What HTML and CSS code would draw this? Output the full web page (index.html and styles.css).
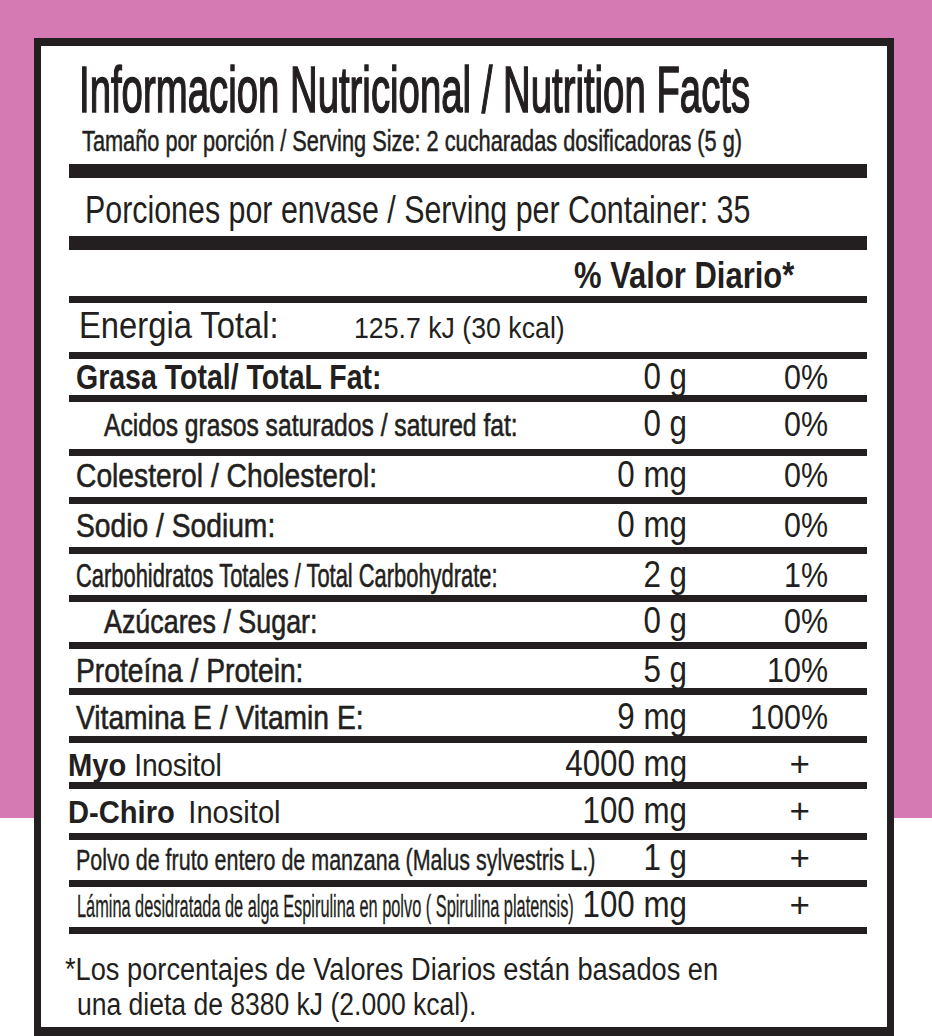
FILE: index.html
```html
<!DOCTYPE html>
<html lang="es">
<head>
<meta charset="utf-8">
<title>Informacion Nutricional / Nutrition Facts</title>
<link rel="stylesheet" href="styles.css">
</head>
<body>
<section class="card">
  <div class="facts">
    <header class="head">
      <h1 class="t title">Informacion Nutricional / Nutrition Facts</h1>
      <p class="t serving">Tamaño por porción / Serving Size: 2 cucharadas dosificadoras (5 g)</p>
    </header>
    <div class="row thick p12"><span class="t porciones">Porciones por envase / Serving per Container: 35</span></div>
    <div class="row thick p8"><span class="t dv">% Valor Diario*</span></div>
    <div class="row p4"><span class="t energy">Energia Total:</span><span class="t kcal">125.7 kJ (30 kcal)</span></div>
    <div class="row p0"><span class="t lbl fat">Grasa Total/ TotaL Fat:</span><span class="t val">0 g</span><span class="t pct">0%</span></div>
    <div class="row p4"><span class="t lbl indent acidos">Acidos grasos saturados / satured fat:</span><span class="t val">0 g</span><span class="t pct">0%</span></div>
    <div class="row p1"><span class="t lbl">Colesterol / Cholesterol:</span><span class="t val">0 mg</span><span class="t pct">0%</span></div>
    <div class="row p3"><span class="t lbl">Sodio / Sodium:</span><span class="t val">0 mg</span><span class="t pct">0%</span></div>
    <div class="row p3"><span class="t lbl carbs">Carbohidratos Totales / Total Carbohydrate:</span><span class="t val">2 g</span><span class="t pct">1%</span></div>
    <div class="row p1"><span class="t lbl indent sugar">Azúcares / Sugar:</span><span class="t val">0 g</span><span class="t pct">0%</span></div>
    <div class="row p3"><span class="t lbl">Proteína / Protein:</span><span class="t val">5 g</span><span class="t pct">10%</span></div>
    <div class="row p4"><span class="t lbl">Vitamina E / Vitamin E:</span><span class="t val">9 mg</span><span class="t pct">100%</span></div>
    <div class="row p3"><span class="t lbl ino"><b>Myo</b> <span class="ino-name">Inositol</span></span><span class="t val">4000 mg</span><span class="t pct plus">+</span></div>
    <div class="row p4"><span class="t lbl ino"><b>D-Chiro</b> <span class="gap">Inositol</span></span><span class="t val">100 mg</span><span class="t pct plus">+</span></div>
    <div class="row p0"><span class="t lbl apple">Polvo de fruto entero de manzana (Malus sylvestris L.)</span><span class="t val">1 g</span><span class="t pct plus">+</span></div>
    <div class="row p0"><span class="t lbl algae">Lámina desidratada de alga Espirulina en polvo ( Spirulina platensis)</span><span class="t val">100 mg</span><span class="t pct plus">+</span></div>
  </div>
  <div class="note">
    <span class="t line">*Los porcentajes de Valores Diarios están basados en</span>
    <span class="t line l2">una dieta de 8380 kJ (2.000 kcal).</span>
  </div>
</section>
</body>
</html>
```
FILE: styles.css
```css
* {
  box-sizing: border-box;
  margin: 0;
  padding: 0;
}

html,
body {
  height: 100%;
}

body {
  background: linear-gradient(to bottom, #d67ab4 0, #d67ab4 818px, #ffffff 818px);
  font-family: "Liberation Sans", Arial, sans-serif;
  color: #231f20;
  overflow: hidden;
}

.card {
  margin: 38px 0 0 34px;
  width: 860px;
  height: 998px;
  background: #ffffff;
  border-style: solid;
  border-color: #231f20;
  border-width: 8px 7px 9px 7px;
  padding: 0 20px 0 28px;
}

.facts {
  display: grid;
  grid-template-columns: minmax(0, 1fr);
  grid-template-rows: 118px 72px 60px 56px 43px 54px 48px 50px 48px 47px 46px 48px 46px 51px 47px 47px;
  border-bottom: 7px solid #231f20;
}

.t {
  display: block;
  white-space: nowrap;
  line-height: 1;
  font-weight: 400;
  transform-origin: left center;
}

/* header */
.head {
  min-width: 0;
  padding: 12px 0 0 10px;
}

.title {
  font-size: 64px;
  transform: scaleX(0.599);
  -webkit-text-stroke: 1.6px #231f20;
}

.serving {
  margin: 5px 0 0 3px;
  font-size: 29px;
  transform: scaleX(0.75);
  -webkit-text-stroke: 0.5px #231f20;
}

/* rows */
.row {
  display: flex;
  align-items: baseline;
  min-width: 0;
  border-top: 7px solid #231f20;
  padding: 3px 39px 0 7px;
}

.row.thick {
  border-top-width: 14px;
}

.p0 { padding-top: 0; }
.p1 { padding-top: 1px; }
.p3 { padding-top: 3px; }
.p4 { padding-top: 4px; }
.p8 { padding-top: 8px; }
.p12 { padding-top: 12px; }

.porciones {
  margin-left: 9px;
  font-size: 39px;
  transform: scaleX(0.779);
}

.dv {
  margin-left: 498px;
  font-size: 36px;
  font-weight: 700;
  transform: scaleX(0.86);
}

.energy {
  flex: 0 0 275px;
  margin-left: 3px;
  font-size: 37px;
  transform: scaleX(0.885);
}

.kcal {
  flex: 1 1 0;
  min-width: 0;
  font-size: 30px;
  transform: scaleX(0.89);
}

.lbl {
  flex: 1 1 0;
  min-width: 0;
  font-size: 34px;
  transform: scaleX(0.83);
  -webkit-text-stroke: 0.6px #231f20;
}

.lbl.indent {
  margin-left: 28px;
}

.fat {
  font-size: 35px;
  font-weight: 700;
  transform: scaleX(0.814);
  -webkit-text-stroke: 0;
}

.acidos {
  font-size: 32px;
  transform: scaleX(0.77);
}

.sugar {
  transform: scaleX(0.79);
}

.carbs {
  transform: scaleX(0.644);
}

.ino {
  margin-left: -8px;
  font-size: 32px;
  transform: scaleX(0.91);
  -webkit-text-stroke: 0;
}

.ino b {
  font-weight: 700;
}

.ino .ino-name {
  font-size: 31px;
  letter-spacing: -0.3px;
}

.ino .gap {
  margin-left: 6px;
}

.apple {
  font-size: 30px;
  transform: scaleX(0.716);
  -webkit-text-stroke: 0.4px #231f20;
}

.algae {
  margin-left: 1px;
  font-size: 31px;
  transform: scaleX(0.527);
  -webkit-text-stroke: 0.3px #231f20;
}

.val {
  flex: 0 0 128px;
  text-align: right;
  font-size: 36px;
  transform: scaleX(0.87);
  transform-origin: right center;
}

.pct {
  flex: 0 0 141px;
  text-align: right;
  font-size: 35px;
  transform: scaleX(0.87);
  transform-origin: right center;
}

.pct.plus {
  transform: none;
  padding-right: 18px;
}

/* footnote */
.note {
  margin: 18px 0 0 -4px;
  font-size: 31px;
}

.line {
  line-height: 35px;
  transform: scaleX(0.878);
}

.line.l2 {
  margin-left: 12px;
  transform: scaleX(0.855);
}
```
